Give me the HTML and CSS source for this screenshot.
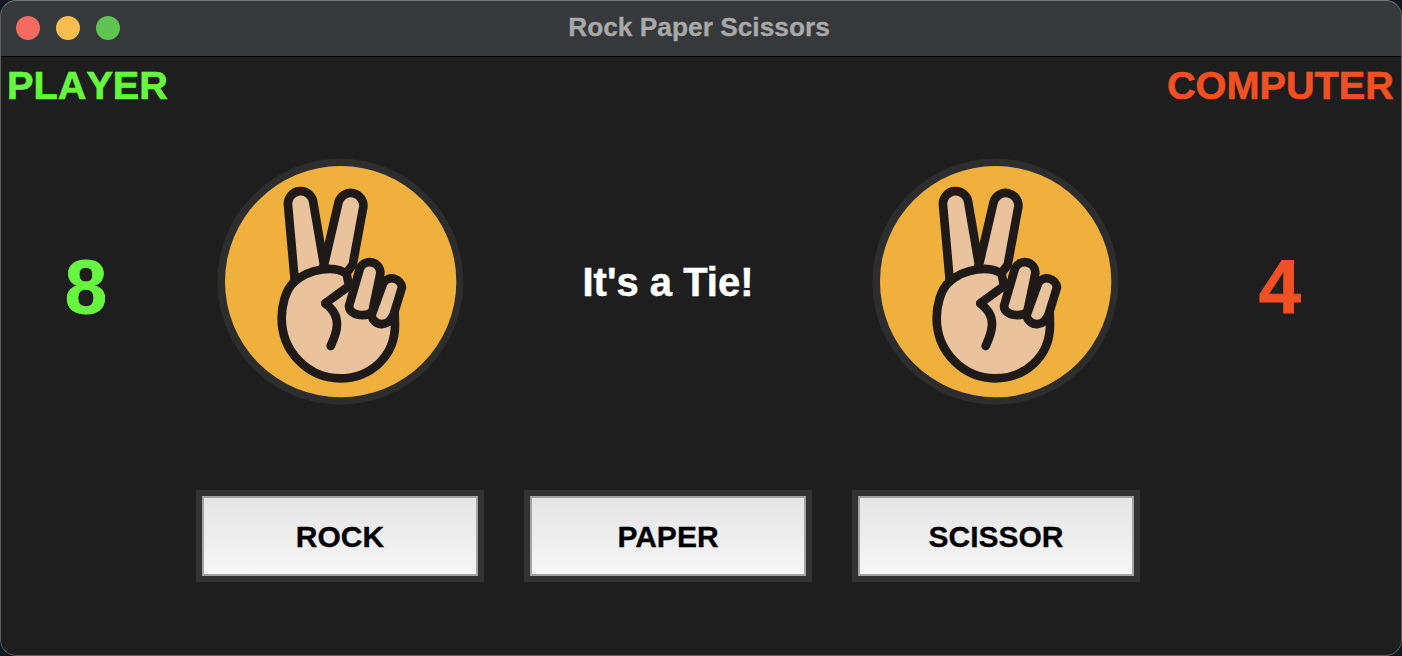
FILE: index.html
```html
<!DOCTYPE html>
<html lang="en">
<head>
  <meta charset="UTF-8" />
  <meta name="viewport" content="width=device-width, initial-scale=1.0"/>
  <title>Rock Paper Scissors</title>
  <link rel="stylesheet" href="styles.css">
</head>
<body>
  <svg class="defs" width="0" height="0">
    <symbol id="scissors-hand" viewBox="0 0 840 795">
      <circle cx="421" cy="395" r="369" fill="#2d2d2d"/>
      <circle cx="422" cy="395" r="347" fill="#f0b03e"/>
      <g fill="#e8c39e" stroke="#1f1a18" stroke-width="26" stroke-linejoin="round" stroke-linecap="round">
        <path d="M285 400 L264 165 A38 38 0 0 1 340 158 L372 345 L330 420 Z"/>
        <path d="M372 345 L416 155 A38 38 0 0 1 490 170 L458 345 L400 420 Z"/>
        <path stroke="none" d="M283 395 C255 420 245 470 245 505 C245 605 325 685 420 685 C510 685 585 620 585 525 L520 400 L440 372 C400 345 330 355 283 395 Z"/>
        <path fill="none" d="M283 395 C255 420 245 470 245 505 C245 605 325 685 420 685 C510 685 585 620 585 525 L584 490"/>
        <path fill="none" d="M283 395 C330 355 405 345 440 372 L447 408 L376 460"/>
        <path d="M447 468 L480 355 A32 32 0 0 1 541 370 L517 485 C498 502 448 498 447 468 Z"/>
        <path d="M514 497 L550 398 A31 31 0 0 1 606 412 L582 490 C567 532 525 532 514 497 Z"/>
        <path fill="none" d="M376 460 C398 478 412 495 411 525 C410 550 400 570 392 588"/>
      </g>
    </symbol>
  </svg>

  <div class="window">
    <header class="titlebar">
      <div class="lights">
        <span class="light red"></span>
        <span class="light yellow"></span>
        <span class="light green"></span>
      </div>
      <h1 class="title">Rock Paper Scissors</h1>
    </header>

    <main class="game">
      <div class="labels">
        <span class="player">PLAYER</span>
        <span class="computer">COMPUTER</span>
      </div>

      <div class="board">
        <div class="score player">8</div>
        <svg class="hand"><use href="#scissors-hand"/></svg>
        <div class="result">It's a Tie!</div>
        <svg class="hand"><use href="#scissors-hand"/></svg>
        <div class="score computer">4</div>
      </div>

      <div class="actions">
        <button class="button">ROCK</button>
        <button class="button">PAPER</button>
        <button class="button">SCISSOR</button>
      </div>
    </main>
  </div>
</body>
</html>
```

FILE: styles.css
```css
* {
  box-sizing: border-box;
  margin: 0;
  padding: 0;
}

body {
  overflow: hidden;
  background: #0d1a24;
  font-family: 'Liberation Sans', Arial, sans-serif;
  font-weight: bold;
}

.defs {
  position: absolute;
}

.window {
  position: relative;
  display: flex;
  flex-direction: column;
  width: 1402px;
  height: 656px;
  overflow: hidden;
  border-radius: 16px;
  background: #1e1e1e;
}

.window::after {
  content: "";
  position: absolute;
  inset: 0;
  border: 1px solid #5e5e5e;
  border-top-color: #777;
  border-radius: 16px;
  pointer-events: none;
}

.titlebar {
  position: relative;
  display: flex;
  flex-shrink: 0;
  align-items: center;
  justify-content: center;
  height: 57px;
  background: #37383a;
  border-bottom: 1px solid #000;
}

.lights {
  position: absolute;
  top: 16px;
  left: 16px;
  display: flex;
  gap: 16px;
}

.light {
  width: 24px;
  height: 24px;
  border-radius: 50%;
}

.red { background: #f26a60; }
.yellow { background: #f8bd4f; }
.green { background: #5fc454; }

.title {
  padding: 0 4px 2px 0;
  font-size: 26.3px;
  font-weight: bold;
  color: #a9a9aa;
  -webkit-text-stroke: 0.3px #a9a9aa;
}

.labels {
  display: flex;
  justify-content: space-between;
  padding: 5px 8px 0 7px;
  font-size: 39.7px;
  font-kerning: none;
  line-height: 46px;
  -webkit-text-stroke: 0.6px currentColor;
}

.player { color: #68f741; }
.computer { color: #f15024; }

.board {
  display: grid;
  grid-template-columns: 172px 336px 318px 338px 232px;
  align-items: center;
  justify-items: center;
  height: 265px;
  margin-top: 42px;
}

.score {
  font-size: 76px;
  line-height: 1;
  padding-top: 8px;
  -webkit-text-stroke: 0.8px currentColor;
}

.hand {
  width: 280px;
  height: 265px;
}

.result {
  padding-left: 2px;
  font-size: 40px;
  color: #fff;
  -webkit-text-stroke: 0.5px #fff;
}

.actions {
  display: flex;
  gap: 40px;
  margin-top: 75px;
  padding-left: 196px;
}

.button {
  width: 288px;
  height: 92px;
  padding-top: 2px;
  border: 6px solid #333;
  box-shadow: inset 0 0 0 2px #a3a3a3;
  background: linear-gradient(#e5e5e5, #f6f6f6);
  color: #000;
  font-family: inherit;
  font-size: 30px;
  font-weight: bold;
  -webkit-text-stroke: 0.3px #000;
}
```
